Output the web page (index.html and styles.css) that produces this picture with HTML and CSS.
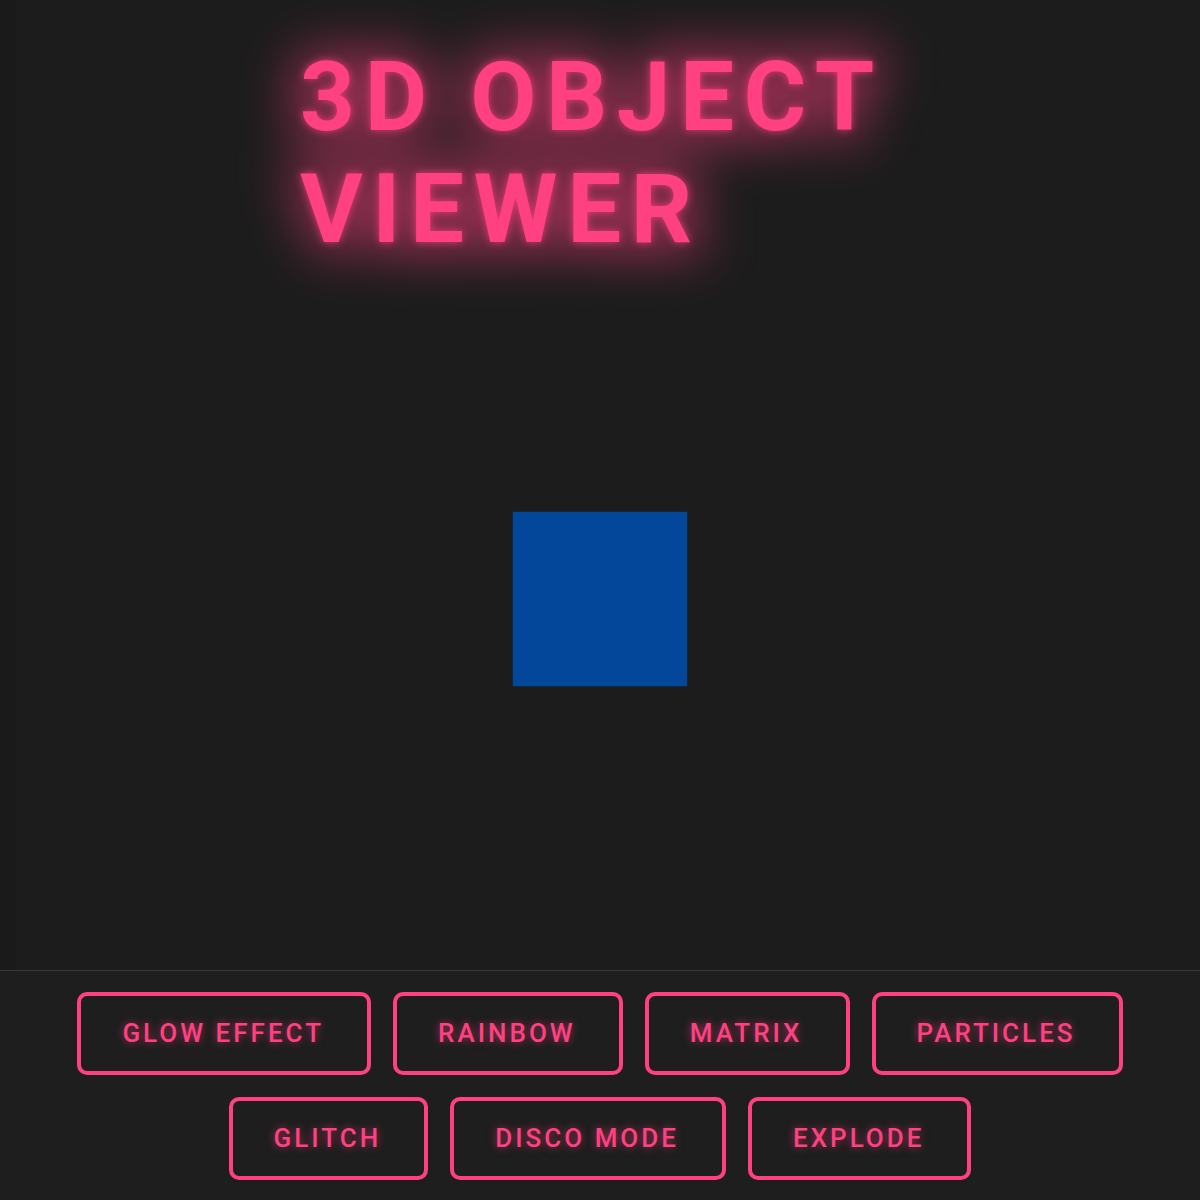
FILE: index.html
```html
<!DOCTYPE html>
<html lang="en">
<head>
<meta charset="utf-8">
<title>3D Object Viewer</title>
<link rel="stylesheet" href="styles.css">
</head>
<body>
<div class="page">
  <main class="stage">
    <h1 class="title" data-text="3D OBJECT VIEWER">3D OBJECT VIEWER</h1>
    <div class="cube"></div>
  </main>
  <footer class="controls">
    <button class="btn">GLOW EFFECT</button>
    <button class="btn">RAINBOW</button>
    <button class="btn">MATRIX</button>
    <button class="btn">PARTICLES</button>
    <button class="btn">GLITCH</button>
    <button class="btn">DISCO MODE</button>
    <button class="btn">EXPLODE</button>
  </footer>
</div>
</body>
</html>
```

FILE: styles.css
```css
* { box-sizing: border-box; }
html, body {
  margin: 0;
  padding: 0;
  background: #1c1c1c;
  font-family: Roboto, "Liberation Sans", sans-serif;
}
.page {
  width: 1200px;
  height: 1200px;
  display: flex;
  flex-direction: column;
  overflow: hidden;
  background: linear-gradient(to right, #1a1a1a 0, #1a1a1a 15px, #1c1c1c 16px);
}
.stage {
  flex: 1;
  display: flex;
  flex-direction: column;
  align-items: center;
}
.title {
  position: relative;
  z-index: 0;
  width: 600px;
  margin: 41px 0 0 0;
  font-size: 96px;
  font-weight: 700;
  line-height: normal;
  letter-spacing: 0.1em;
  color: #ff4081;
  text-align: left;
  text-shadow: 0 0 8px rgba(255, 64, 129, 0.8);
}
.title::before {
  content: attr(data-text);
  position: absolute;
  left: 0;
  top: 0;
  width: 100%;
  z-index: -1;
  color: #ff4081;
  -webkit-text-stroke: 26px #ff4081;
  filter: blur(26px);
  opacity: 0.5;
  text-shadow: none;
  pointer-events: none;
}
.cube {
  width: 174px;
  height: 174px;
  margin-top: 247px;
  background: #02479a;
  box-shadow: 0 0 2px rgba(2, 71, 154, 0.8);
}
.controls {
  flex: none;
  border-top: 1px solid #383838;
  background: #1e1e1e;
  padding: 21px 20px 20px;
  display: flex;
  flex-wrap: wrap;
  justify-content: center;
  gap: 22px;
}
.btn {
  font-family: Roboto, "Liberation Sans", sans-serif;
  font-size: 26px;
  font-weight: 500;
  letter-spacing: 3px;
  line-height: 31px;
  color: #ff4081;
  background: transparent;
  border: 4px solid #ff4081;
  border-radius: 10px;
  padding: 22px 43px 22px 41px;
  text-shadow: 0 0 8px rgba(255, 64, 129, 0.6);
  cursor: pointer;
}
```
